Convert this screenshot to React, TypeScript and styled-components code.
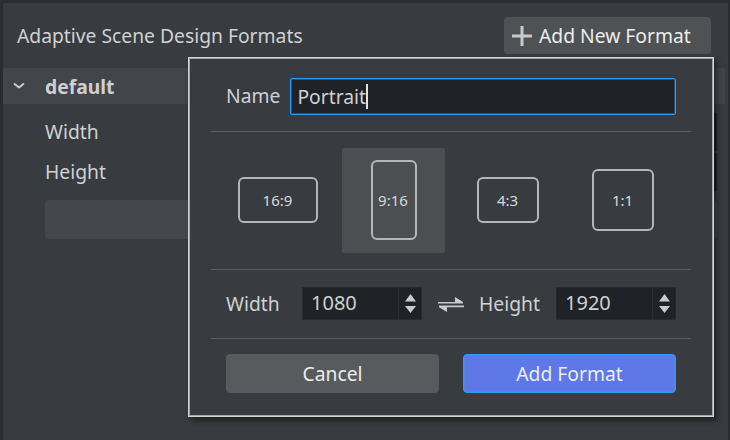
import React from "react";
import styled, { createGlobalStyle } from "styled-components";

const GlobalStyle = createGlobalStyle`
  html, body {
    margin: 0;
    width: 730px;
    height: 440px;
    overflow: hidden;
    background: #2a2c30;
    font-family: "Noto Sans", "Open Sans", sans-serif;
  }
`;

interface FormatOption {
  label: string;
  width: number;
  height: number;
  selected?: boolean;
}

const FORMATS: FormatOption[] = [
  { label: "16:9", width: 80, height: 46 },
  { label: "9:16", width: 46, height: 80, selected: true },
  { label: "4:3", width: 62, height: 46 },
  { label: "1:1", width: 62, height: 62 },
];

const PlusIcon = () => (
  <svg width="22" height="22" viewBox="0 0 22 22">
    <path d="M9.5 1h3v8.5H21v3h-8.5V21h-3v-8.5H1v-3h8.5z" fill="#c9cacb" />
  </svg>
);

const ChevronIcon = () => (
  <svg width="12" height="8" viewBox="0 0 12 8">
    <path d="M1 1.5 6 5.5 11 1.5" fill="none" stroke="#c9cacb" strokeWidth="2" />
  </svg>
);

const SwapIcon = () => (
  <svg width="26" height="16" viewBox="0 0 26 16">
    <path d="M0 6h25v1.6H0zM17 1l8 5h-8zM1 9.6h25v1.6H1zM1 11.2h8v4.8z" fill="#c9cacb" />
  </svg>
);

const SpinArrows = () => (
  <svg width="11" height="19" viewBox="0 0 11 19">
    <path d="M5.5 0 11 7.5H0zM0 12h11L5.5 19z" fill="#c9cacb" />
  </svg>
);

const NumberField: React.FC<{ value: string }> = ({ value }) => (
  <Spinner>
    <SpinnerValue>{value}</SpinnerValue>
    <SpinnerButtons>
      <SpinArrows />
    </SpinnerButtons>
  </Spinner>
);

const App: React.FC = (): React.ReactElement => {
  return (
    <Page>
      <GlobalStyle />
      <Panel>
        <Header>
          <Title>Adaptive Scene Design Formats</Title>
          <AddNewButton>
            <PlusIcon />
            Add New Format
          </AddNewButton>
        </Header>
        <TreeRow>
          <ChevronIcon />
          <TreeLabel>default</TreeLabel>
        </TreeRow>
        <PropList>
          <PropRow>
            <PropLabel>Width</PropLabel>
            <PropInput />
          </PropRow>
          <PropRow>
            <PropLabel>Height</PropLabel>
            <PropInput />
          </PropRow>
        </PropList>
        <GreyBar />

        <Modal>
          <NameRow>
            <NameLabel>Name</NameLabel>
            <NameInput>
              Portrait
              <Caret />
            </NameInput>
          </NameRow>
          <Divider />
          <FormatGrid>
            {FORMATS.map((format) => (
              <FormatCell key={format.label} $selected={format.selected}>
                <FormatShape $w={format.width} $h={format.height}>
                  {format.label}
                </FormatShape>
              </FormatCell>
            ))}
          </FormatGrid>
          <Divider />
          <SizeRow>
            <FieldLabel>Width</FieldLabel>
            <NumberField value="1080" />
            <SwapButton>
              <SwapIcon />
            </SwapButton>
            <FieldLabel>Height</FieldLabel>
            <NumberField value="1920" />
          </SizeRow>
          <Divider />
          <Actions>
            <ActionButton>Cancel</ActionButton>
            <ActionButton $primary>Add Format</ActionButton>
          </Actions>
        </Modal>
      </Panel>
    </Page>
  );
};

const Page = styled.div`
  width: 730px;
  height: 440px;
  padding: 3px 2px 0 3px;
  box-sizing: border-box;
`;

const Panel = styled.div`
  position: relative;
  height: 437px;
  background: #383b40;
  color: #c9cacb;
`;

const Header = styled.div`
  display: flex;
  align-items: center;
  justify-content: space-between;
  height: 37px;
  padding: 14px 17px 14px 14px;
`;

const Title = styled.div`
  font-size: 19.3px;
  line-height: 37px;
  color: #d0d1d2;
`;

const AddNewButton = styled.div`
  display: flex;
  align-items: center;
  gap: 6px;
  width: 207px;
  height: 37px;
  box-sizing: border-box;
  padding-left: 7px;
  border-radius: 4px;
  background: #4f5255;
  color: #eceded;
  font-size: 19.3px;
`;

const TreeRow = styled.div`
  display: flex;
  align-items: center;
  height: 36px;
  margin-right: 3px;
  padding-left: 10px;
  background: #42454a;
`;

const TreeLabel = styled.span`
  margin-left: 20px;
  font-size: 19.3px;
  font-weight: 700;
  color: #cfd0d1;
`;

const PropList = styled.div`
  display: flex;
  flex-direction: column;
  gap: 2px;
  margin: 9px 11px 0 42px;
`;

const PropRow = styled.div`
  display: flex;
  align-items: center;
  justify-content: space-between;
  height: 38px;
`;

const PropLabel = styled.span`
  padding-bottom: 2px;
  font-size: 19.3px;
  color: #d0d1d2;
`;

const PropInput = styled.div`
  width: 60px;
  height: 38px;
  background: #1f2226;
`;

const GreyBar = styled.div`
  height: 39px;
  margin: 9px 11px 0 42px;
  border-radius: 4px;
  background: #44474b;
`;

const Modal = styled.div`
  position: absolute;
  left: 185px;
  top: 54px;
  width: 526px;
  height: 360px;
  box-sizing: border-box;
  padding: 20px 22px 0;
  border: 1px solid #d2d3d4;
  background: #383b40;
  box-shadow: inset 0 0 0 1px #a4a6a8, 3px 4px 6px rgba(0, 0, 0, 0.45);
`;

const NameRow = styled.div`
  display: flex;
  align-items: center;
  height: 37px;
  margin: 0 15px 16px;
  gap: 10px;
`;

const FieldLabel = styled.span`
  font-size: 19.3px;
  color: #d0d1d2;
`;

const NameLabel = styled(FieldLabel)`
  margin: 0 0 2px 0;
`;

const NameInput = styled.div`
  display: flex;
  align-items: center;
  flex: 1;
  height: 37px;
  box-sizing: border-box;
  padding-left: 6px;
  border: 1px solid #2a9df4;
  border-radius: 2px;
  background: #1f2226;
  box-shadow: inset 0 0 0 1px rgba(42, 157, 244, 0.4);
  color: #d0d1d2;
  font-size: 19.3px;
`;

const Caret = styled.span`
  width: 2px;
  height: 25px;
  background: #e2e2e2;
`;

const Divider = styled.div`
  height: 1px;
  background: #5c5f62;
`;

const FormatGrid = styled.div`
  display: grid;
  grid-template-columns: repeat(4, 103px);
  column-gap: 12px;
  height: 105px;
  margin: 16px 15px 16px 16px;
`;

const FormatCell = styled.div<{ $selected?: boolean }>`
  display: flex;
  align-items: center;
  justify-content: center;
  box-sizing: border-box;
  padding: 0 ${({ $selected }) => ($selected ? 0 : 1)}px 1px 0;
  border-radius: 2px;
  background: ${({ $selected }) => ($selected ? "#4c4f52" : "transparent")};
`;

const FormatShape = styled.div<{ $w: number; $h: number }>`
  display: flex;
  align-items: center;
  justify-content: center;
  width: ${({ $w }) => $w}px;
  height: ${({ $h }) => $h}px;
  box-sizing: border-box;
  padding-right: 1px;
  border: 2px solid #b4b6b7;
  border-radius: 6px;
  color: #d8d9d9;
  font-size: 15px;
`;

const SizeRow = styled.div`
  display: grid;
  grid-template-columns: 76px 120px 57px 77px 120px;
  align-items: center;
  height: 33px;
  margin: 17px 15px 18px;
`;

const Spinner = styled.div`
  display: flex;
  align-items: center;
  height: 33px;
  box-sizing: border-box;
  border: 1px solid #26292d;
  background: #1f2226;
  color: #d0d1d2;
  font-size: 20px;
`;

const SpinnerValue = styled.span`
  flex: 1;
  padding: 0 0 2px 8px;
`;

const SpinnerButtons = styled.div`
  display: flex;
  align-items: center;
  justify-content: center;
  width: 22px;
  height: 31px;
  border-left: 1px solid #2a2d31;
`;

const SwapButton = styled.div`
  display: flex;
  justify-content: center;
`;

const Actions = styled.div`
  display: flex;
  justify-content: space-between;
  margin: 15px 15px 0;
`;

const ActionButton = styled.div<{ $primary?: boolean }>`
  display: flex;
  align-items: center;
  justify-content: center;
  width: 213px;
  height: 39px;
  box-sizing: border-box;
  border-radius: 4px;
  border: 1px solid ${({ $primary }) => ($primary ? "#2a9df4" : "#585b5e")};
  background: ${({ $primary }) => ($primary ? "#5f78e8" : "#585b5e")};
  box-shadow: ${({ $primary }) => ($primary ? "inset 0 0 0 1px rgba(42, 157, 244, 0.35)" : "none")};
  color: #eceded;
  font-size: 19.3px;
`;

export default App;
